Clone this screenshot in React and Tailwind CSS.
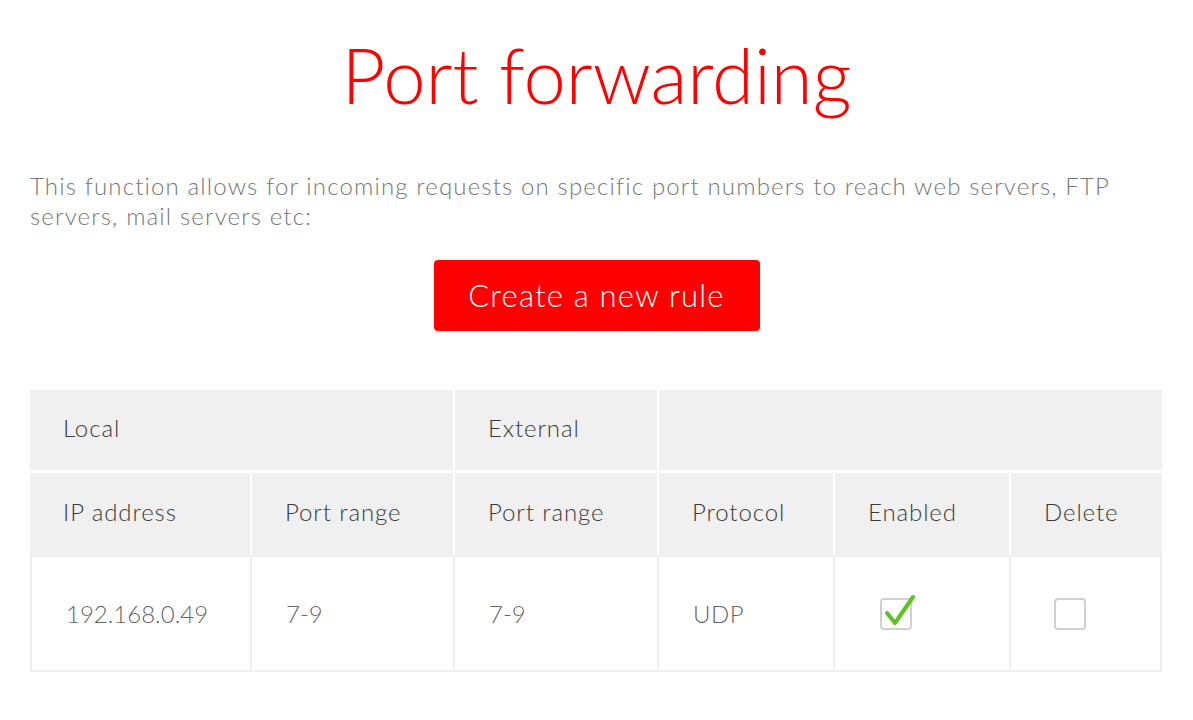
const headCell = "bg-[#f0f0f0] text-[#3a3a3a] flex items-center pl-[33px] pb-[4px] tracking-[0.9px]";
const bodyCell = "bg-white text-[#666] flex items-center pl-[34px]";

const Checkbox = ({ checked }) => (
  <div className="relative w-[32px] h-[32px] rounded-[4px] border-2 border-[#d0d0d0] bg-white">
    {checked && (
      <svg
        className="absolute left-[1px] top-[-6px]"
        width="36"
        height="36"
        viewBox="0 0 36 36"
      >
        <path
          d="M4 19 L12 29 L30 3"
          fill="none"
          stroke="#5cc41f"
          strokeWidth="4"
          strokeLinecap="round"
          strokeLinejoin="round"
        />
      </svg>
    )}
  </div>
);

export default function App() {
  return (
    <div
      className="w-[1193px] h-[720px] bg-white px-[30px] pt-[30px]"
      style={{ fontFamily: "Lato, 'Noto Sans', sans-serif" }}
    >
      <h1 className="text-center text-[#f00] font-light text-[76px] leading-[90px]">
        Port forwarding
      </h1>

      <p className="mt-[51px] text-[#777] text-[24px] leading-[30px] font-light tracking-[1.15px]">
        This function allows for incoming requests on specific port numbers to reach web servers, FTP
        servers, mail servers etc:
      </p>

      <div className="flex justify-center mt-[29px]">
        <button className="w-[326px] h-[71px] bg-[#f00] text-white rounded-[4px] text-[31px] font-light tracking-[1.2px]">
          Create a new rule
        </button>
      </div>

      <div className="mt-[59px] w-[1132px] text-[24px] font-light">
        <div className="flex gap-[2px] h-[80px]">
          <div className={`${headCell} w-[423px]`}>Local</div>
          <div className={`${headCell} w-[202px]`}>External</div>
          <div className={`${headCell} flex-1`}></div>
        </div>
        <div className="flex gap-[2px] h-[82px] mt-[3px]">
          <div className={`${headCell} w-[220px]`}>IP address</div>
          <div className={`${headCell} w-[201px]`}>Port range</div>
          <div className={`${headCell} w-[202px]`}>Port range</div>
          <div className={`${headCell} w-[174px]`}>Protocol</div>
          <div className={`${headCell} w-[174px]`}>Enabled</div>
          <div className={`${headCell} flex-1`}>Delete</div>
        </div>
        <div className="flex gap-[2px] h-[117px] bg-[#eeeeee] px-[2px] pb-[2px] pt-[2px]">
          <div className={`${bodyCell} w-[218px]`}>192.168.0.49</div>
          <div className={`${bodyCell} w-[201px]`}>7-9</div>
          <div className={`${bodyCell} w-[202px]`}>7-9</div>
          <div className={`${bodyCell} w-[174px] tracking-[0.5px]`}>UDP</div>
          <div className={`${bodyCell} w-[174px] pl-[45px]`}>
            <Checkbox checked />
          </div>
          <div className={`${bodyCell} flex-1 pl-[43px]`}>
            <Checkbox />
          </div>
        </div>
      </div>
    </div>
  );
}
